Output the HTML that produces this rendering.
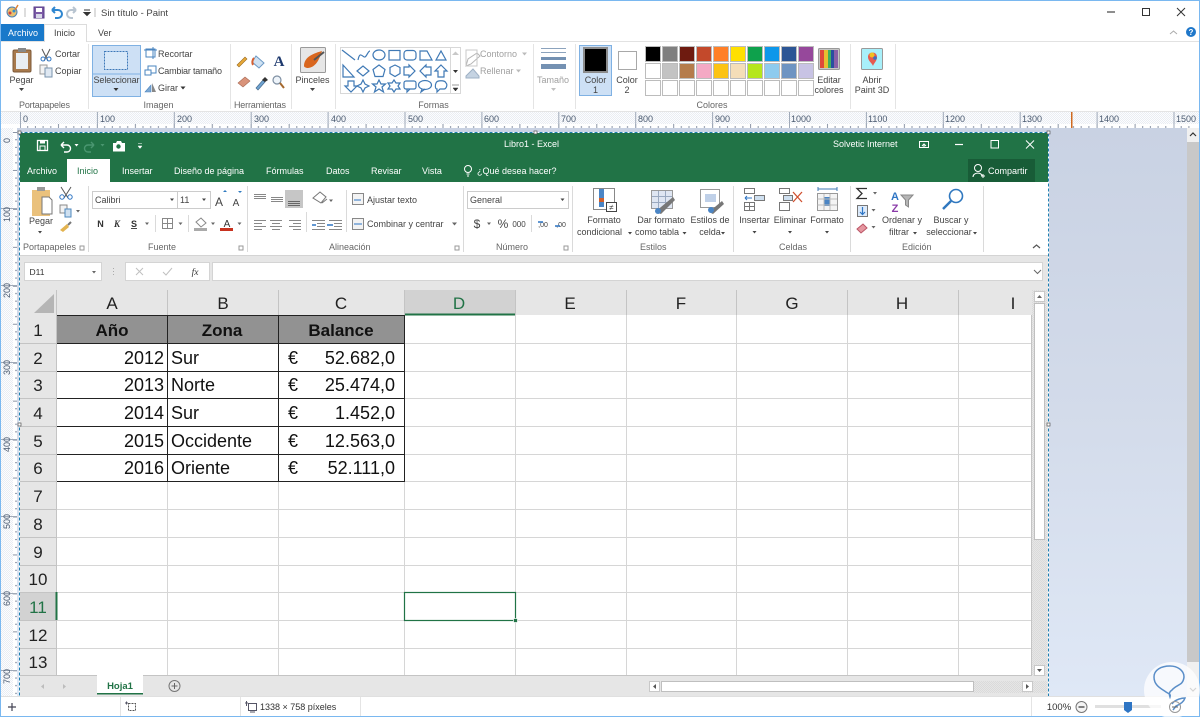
<!DOCTYPE html>
<html lang="es"><head><meta charset="utf-8"><title>Sin título - Paint</title>
<style>
html,body{margin:0;padding:0;background:#fff;width:1200px;height:717px;overflow:hidden}
svg{display:block}
text{font-family:"Liberation Sans",sans-serif;font-size:9px;fill:#444}
.m{text-anchor:middle}
.g{fill:#666}
.l{fill:#a0a0a0}
.w{fill:#fff}
.r{font-size:9px;fill:#4a5a70}
.h{font-size:17px;fill:#222;text-anchor:middle}
.c{font-size:18px;fill:#111}
.b{font-size:17px;font-weight:bold;fill:#111;text-anchor:middle}
.e{text-anchor:end}
.s{fill:none;stroke:#3f79b5;stroke-width:1.2}
.k{fill:none;stroke:#666;stroke-width:1}
.t{fill:#555}
</style></head><body>
<svg width="1200" height="717" viewBox="0 0 1200 717" xmlns="http://www.w3.org/2000/svg">
<defs>
<pattern id="dith" width="2" height="2" patternUnits="userSpaceOnUse"><rect width="2" height="2" fill="#fdfdfe"/><rect width="1" height="1" fill="#e9edf3"/><rect x="1" y="1" width="1" height="1" fill="#e9edf3"/></pattern>
<pattern id="dg" width="2" height="2" patternUnits="userSpaceOnUse"><rect width="2" height="2" fill="#e6e6e6"/><rect width="1" height="1" fill="#dadada"/><rect x="1" y="1" width="1" height="1" fill="#dadada"/></pattern>
<pattern id="hticks" x="20" y="124" width="76.9" height="4" patternUnits="userSpaceOnUse"><path d="M.5 0V4M7.7 2V4M15.4 2V4M23.1 2V4M30.8 2V4M38.5 0V4M46.1 2V4M53.8 2V4M61.5 2V4M69.2 2V4" stroke="#8a94a6" stroke-width="1" fill="none"/></pattern>
<pattern id="vticks" x="13" y="132" width="4" height="76.9" patternUnits="userSpaceOnUse"><path d="M0 .5H4M2 7.7H4M2 15.4H4M2 23.1H4M2 30.8H4M0 38.5H4M2 46.1H4M2 53.8H4M2 61.5H4M2 69.2H4" stroke="#8a94a6" stroke-width="1" fill="none"/></pattern>
<linearGradient id="canv" x1="0" y1="0" x2="0" y2="1"><stop offset="0" stop-color="#c9d2e3"/><stop offset=".5" stop-color="#d3dbea"/><stop offset="1" stop-color="#dfe8f6"/></linearGradient>
</defs>

<rect width="1200" height="717" fill="#fff"/>

<!-- Quick access -->
<circle cx="12" cy="12" r="5" fill="#e8c070" stroke="#4a80b8"/><circle cx="10" cy="13" r="1.5" fill="#d04040"/><circle cx="14" cy="11" r="1.5" fill="#3090d0"/><path d="M15 10l3-5" stroke="#e08030" stroke-width="1.4"/>
<path d="M25 8V17" stroke="#bbb"/>
<rect x="34" y="7" width="10" height="11" fill="#7b5aa6" stroke="#5a3f88"/><rect x="36" y="8" width="6" height="4" fill="#fff"/><rect x="36" y="14" width="6" height="4" fill="#d8d8e8"/>
<path d="M52 10h6a4 4 0 0 1 0 8h-3M52 10l3-3M52 10l3 3" fill="none" stroke="#2e86d0" stroke-width="2"/>
<path d="M76 10h-5a4 4 0 0 0 0 8h2M76 10l-3-3M76 10l-3 3" fill="none" stroke="#b8c4d0" stroke-width="2"/>
<path d="M84 10h6M84 12.500l3 3 3-3z" fill="#333" stroke="#333"/>
<path d="M95 8V17" stroke="#bbb"/>
<text x="101" y="16" style="font-size:9.500px" fill="#333">Sin título - Paint</text>

<!-- Window buttons -->
<path d="M1107 12H1115" stroke="#444" stroke-width="1.200"/>
<rect x="1142.500" y="8.500" width="7" height="7" fill="none" stroke="#333"/>
<path d="M1177 8l8 8M1185 8l-8 8" stroke="#333" stroke-width="1"/>
<path d="M1170 34l3.500-3 3.500 3" fill="none" stroke="#aaa"/>
<circle cx="1191" cy="32" r="5" fill="#1f77c9"/><text x="1191" y="35" class="w m" style="font-size:8px;font-weight:bold">?</text>

<!-- Tabs -->
<rect x="1" y="24" width="43" height="18" fill="#1979ca"/>
<text x="8" y="36" class="w">Archivo</text>
<path d="M44.500 42V24.500H86.500V42" fill="#fff" stroke="#dcdcdc"/>
<text x="54" y="36" fill="#333">Inicio</text>
<text x="98" y="36" fill="#333">Ver</text>
<path d="M87 41.500H1200M0 41.500H44" stroke="#e2e2e2"/>

<!-- Ribbon rule -->
<rect x="0" y="111" width="1200" height="1" fill="#e4e4e4"/>
<g stroke="#e4e4e4"><path d="M88.500 44V109M230.500 44V109M291.500 44V109M335.500 44V109M533.500 44V109M575.500 44V109M850.500 44V109M895.500 44V109"/></g>

<!-- Pegar -->
<rect x="13" y="50" width="18" height="22" rx="1.500" fill="#a8794c" stroke="#7d5a3a"/><rect x="16" y="53" width="12" height="16" fill="#e9eef3"/><rect x="18" y="48" width="8" height="4" fill="#888"/>
<text x="21.500" y="83" class="m">Pegar</text><path d="M19 88h5l-2.500 3z" fill="#444"/>
<path d="M42 49l6 12M50 49l-6 12" stroke="#555" fill="none"/><circle cx="43" cy="59" r="2" fill="none" stroke="#2e75c4"/><circle cx="49" cy="59" r="2" fill="none" stroke="#2e75c4"/>
<text x="55" y="57" fill="#444">Cortar</text>
<rect x="40" y="65" width="7" height="9" fill="#f3f3f3" stroke="#999"/><rect x="45" y="68" width="7" height="9" fill="#dfe8f2" stroke="#7a93ad"/>
<text x="55" y="74">Copiar</text>
<text x="19" y="108" class="g" textLength="51">Portapapeles</text>

<!-- Seleccionar -->
<rect x="92.500" y="45.500" width="48" height="51" fill="#cde0f5" stroke="#7fb1e3"/><path d="M93 74H140" stroke="#7fb1e3"/>
<rect x="104.500" y="51.500" width="23" height="18" fill="#d8e8f8" stroke="#3d78b8" stroke-dasharray="2 1"/>
<text x="93.500" y="83" textLength="46">Seleccionar</text><path d="M113.500 88h5l-2.500 3z" fill="#333"/>
<rect x="146" y="49" width="9" height="8" fill="none" stroke="#4a84bf"/><path d="M144 50h13M153 47v12" stroke="#4a84bf"/>
<text x="158" y="57">Recortar</text>
<rect x="148" y="66" width="8" height="7" fill="none" stroke="#4a84bf"/><rect x="145" y="70" width="6" height="5" fill="#fff" stroke="#4a84bf"/>
<text x="158" y="74" textLength="64">Cambiar tamaño</text>
<path d="M145 92l6-7v7zM147 90" fill="#7ea8d2" stroke="#4a84bf" stroke-width=".6"/><path d="M152 92v-9l4 9z" fill="#888"/>
<text x="158" y="91">Girar</text><path d="M180.500 86.500h5l-2.500 3z" fill="#333"/>
<text x="158.500" y="108" class="g m">Imagen</text>

<!-- Herramientas -->
<path d="M237 65l8-8 2 2-8 8z" fill="#e7a938" stroke="#9a6a20" stroke-width=".6"/>
<path d="M256 56l8 7-5 5-7-6z" fill="#cfe2f3" stroke="#6b98c4"/><path d="M254 58c-2 2-2 5-1 7" stroke="#d86030" stroke-width="2" fill="none"/>
<text x="279" y="66" style="font-family:'Liberation Serif',serif;font-size:15px;font-weight:bold;fill:#1f3a6e" class="m">A</text>
<path d="M238 83l7-6 5 4-7 6z" fill="#d9937a" stroke="#a86a54" stroke-width=".6"/>
<path d="M256 88l7-8 2 2-7 8z" fill="#6fa4d2" stroke="#47698c" stroke-width=".7"/><path d="M262 80l3-3 3 3-3 2z" fill="#333"/>
<circle cx="277" cy="80" r="4" fill="#eef4fa" stroke="#7e8fa2" stroke-width="1.200"/><path d="M280 83l4 5" stroke="#a5692e" stroke-width="2"/>
<text x="234" y="108" class="g" textLength="52">Herramientas</text>

<!-- Pinceles -->
<rect x="300.500" y="47.500" width="25" height="25" rx="1" fill="#e6e6e6" stroke="#9a9a9a"/><path d="M304 66c0-8 7-12 18-15-3 9-6 16-14 17-2 0-4-1-4-2z" fill="#d9661e"/><path d="M314 60l10-8" stroke="#555" stroke-width="2"/>
<text x="312.500" y="83" class="m">Pinceles</text><path d="M310 88h5l-2.500 3z" fill="#444"/>

<!-- Formas gallery -->
<rect x="340.500" y="47.500" width="110" height="46" fill="#fff" stroke="#d8d8d8"/><rect x="450.500" y="47.500" width="10" height="46" fill="#fff" stroke="#d8d8d8"/>
<path d="M452 55l3.500-3.500 3.500 3.500z" fill="#c8c8c8"/><path d="M453 70h5l-2.500 3z" fill="#333"/><path d="M452 85h7M453 88h5l-2.500 3z" fill="#333" stroke="#333" stroke-width=".5"/>
<g class="s">
<path d="M342 50l13 10" class="s"/>
<path d="M358 60c2-10 5-2 7-3s3-6 5-6" class="s"/>
<ellipse cx="379" cy="55" rx="6" ry="5" class="s"/>
<rect x="389" y="50.500" width="11" height="9.500" class="s"/>
<rect x="404" y="50.500" width="12" height="9.500" rx="3" class="s"/>
<path d="M420 60v-9h7l5 9z" class="s"/>
<path d="M436 60l5-9 5 9z" class="s"/>
<path d="M343 77V65l11 12z" class="s"/>
<path d="M357 71l6-5 6 5-6 5z" class="s"/>
<path d="M379 65l6 4.500-2 7h-8l-2-7z" class="s"/>
<path d="M395 65l5 2.500v6l-5 3-5-3v-6z" class="s"/>
<path d="M404 67h5v-2l6 6-6 6v-2h-5z" class="s"/>
<path d="M431 67h-5v-2l-6 6 6 6v-2h5z" class="s"/>
<path d="M441 65l6 6h-3v6h-6v-6h-3z" class="s"/>
<path d="M348 81h6v5h3l-6 6-6-6h3z" class="s"/>
<path d="M363 80l2 4 4 2-4 2-2 4-2-4-4-2 4-2z" class="s"/>
<path d="M379 80l2 4h4.500l-3.500 3 1.500 5-4.500-3-4.500 3 1.500-5-3.500-3H377z" class="s"/>
<path d="M394 80l2 3h4l-2 3 2 3h-4l-2 3-2-3h-4l2-3-2-3h4z" class="s"/>
<rect x="404" y="81" width="12" height="8" rx="2" class="s"/><path d="M407 89v3l3-3" class="s"/>
<ellipse cx="425" cy="85" rx="6.500" ry="4.500" class="s"/><path d="M422 89l-1 3 4-3" class="s"/>
<path d="M436 83c1-3 9-3 10 0 2 2 0 6-2 6h-4l-3 3v-3c-2 0-2-4-1-6z" class="s"/>
</g>
<path d="M466 66l2-7 9-6 3 3-9 8z" fill="#fff" stroke="#b5b5b5"/><path d="M466 50h11v16h-11z" fill="none" stroke="#c8c8c8"/>
<text x="480" y="57" class="l">Contorno</text><path d="M522 52.500h5l-2.500 3z" fill="#bbb"/>
<path d="M466 76l7-7 6 7v2h-13z" fill="#c5d3e2" stroke="#9eb0c4"/>
<text x="480" y="74" class="l">Rellenar</text><path d="M516 69.500h5l-2.500 3z" fill="#bbb"/>
<text x="433.500" y="108" class="g m">Formas</text>

<!-- Tamaño -->
<rect x="541" y="48" width="25" height="1" fill="#8ca3bd"/><rect x="541" y="52" width="25" height="1" fill="#8ca3bd"/><rect x="541" y="57" width="25" height="3" fill="#7491b2"/><rect x="541" y="64" width="25" height="5" fill="#7491b2"/>
<text x="553" y="83" class="l m">Tamaño</text><path d="M551 88h5l-2.500 3z" fill="#c0c0c0"/>

<!-- Colors -->
<rect x="579.500" y="45.500" width="32" height="50" fill="#cde0f5" stroke="#7fb1e3"/>
<rect x="584" y="48" width="23" height="24" fill="#000" stroke="#8c8c8c" stroke-width="2"/>
<text x="595.500" y="83" class="m" fill="#222">Color</text><text x="595.500" y="93" class="m" fill="#222">1</text>
<rect x="618.500" y="51.500" width="18" height="18" fill="#fff" stroke="#a8a8a8" stroke-width="1"/>
<text x="627" y="83" class="m">Color</text><text x="627" y="93" class="m">2</text>
<g stroke="#bcbcbc" stroke-width="1">
<rect x="645.500" y="46.500" width="15" height="15" fill="#000"/>
<rect x="662.500" y="46.500" width="15" height="15" fill="#7f7f7f"/>
<rect x="679.500" y="46.500" width="15" height="15" fill="#6e1b10"/>
<rect x="696.500" y="46.500" width="15" height="15" fill="#c3492b"/>
<rect x="713.500" y="46.500" width="15" height="15" fill="#ff7f27"/>
<rect x="730.500" y="46.500" width="15" height="15" fill="#ffe000"/>
<rect x="747.500" y="46.500" width="15" height="15" fill="#0ea14c"/>
<rect x="764.500" y="46.500" width="15" height="15" fill="#0d97ea"/>
<rect x="781.500" y="46.500" width="15" height="15" fill="#2c5695"/>
<rect x="798.500" y="46.500" width="15" height="15" fill="#96489b"/>
<rect x="645.500" y="63.500" width="15" height="15" fill="#fff"/>
<rect x="662.500" y="63.500" width="15" height="15" fill="#c3c3c3"/>
<rect x="679.500" y="63.500" width="15" height="15" fill="#b57c4c"/>
<rect x="696.500" y="63.500" width="15" height="15" fill="#f4a9c4"/>
<rect x="713.500" y="63.500" width="15" height="15" fill="#fcc314"/>
<rect x="730.500" y="63.500" width="15" height="15" fill="#f5deb8"/>
<rect x="747.500" y="63.500" width="15" height="15" fill="#b5e61d"/>
<rect x="764.500" y="63.500" width="15" height="15" fill="#8ecbee"/>
<rect x="781.500" y="63.500" width="15" height="15" fill="#6e94c2"/>
<rect x="798.500" y="63.500" width="15" height="15" fill="#c8c3e4"/>
<g fill="#fff">
<rect x="645.500" y="80.500" width="15" height="15"/><rect x="662.500" y="80.500" width="15" height="15"/><rect x="679.500" y="80.500" width="15" height="15"/><rect x="696.500" y="80.500" width="15" height="15"/><rect x="713.500" y="80.500" width="15" height="15"/><rect x="730.500" y="80.500" width="15" height="15"/><rect x="747.500" y="80.500" width="15" height="15"/><rect x="764.500" y="80.500" width="15" height="15"/><rect x="781.500" y="80.500" width="15" height="15"/><rect x="798.500" y="80.500" width="15" height="15"/>
</g></g>
<rect x="818.500" y="48.500" width="21" height="21" rx="1" fill="#c6c6c6" stroke="#9a9a9a"/>
<rect x="820" y="50" width="4" height="18" fill="#e04a3a"/><rect x="824" y="50" width="4" height="18" fill="#e8c030"/><rect x="828" y="50" width="3" height="18" fill="#40b060"/><rect x="831" y="50" width="3" height="18" fill="#2a4ea0"/><rect x="834" y="50" width="4" height="18" fill="#8a60a8"/>
<text x="829" y="83" class="m">Editar</text><text x="829" y="93" class="m">colores</text>
<rect x="861.500" y="48.500" width="21" height="21" rx="1" fill="#a8f0fa" stroke="#9a9a9a"/><path d="M868 57c0-6 9-6 9 0 0 4-3 6-4 9-1-3-5-5-5-9z" fill="#e65a50"/><circle cx="872" cy="55" r="2.500" fill="#f0c020"/><circle cx="875" cy="58" r="1.800" fill="#3a6fc0"/>
<text x="872" y="83" class="m">Abrir</text><text x="872" y="93" class="m">Paint 3D</text>
<text x="712" y="108" class="g m">Colores</text>

<!-- Rulers -->
<rect x="0" y="112" width="1200" height="12" fill="url(#dith)"/>
<rect x="0" y="124" width="1200" height="4" fill="#fff"/>
<rect x="20" y="124" width="1170" height="4" fill="url(#hticks)"/>
<path d="M20.500 112V128M97.400 112V128M174.300 112V128M251.200 112V128M328.100 112V128M405 112V128M481.900 112V128M558.800 112V128M635.700 112V128M712.600 112V128M789.500 112V128M866.400 112V128M943.300 112V128M1020.200 112V128M1097.100 112V128M1174 112V128" stroke="#9fa9b8"/>
<g class="r">
<text x="23" y="122" class="r">0</text><text x="100" y="122" class="r">100</text><text x="177" y="122" class="r">200</text><text x="254" y="122" class="r">300</text><text x="331" y="122" class="r">400</text><text x="408" y="122" class="r">500</text><text x="484" y="122" class="r">600</text><text x="561" y="122" class="r">700</text><text x="638" y="122" class="r">800</text><text x="715" y="122" class="r">900</text><text x="791" y="122" class="r">1000</text><text x="868" y="122" class="r">1100</text><text x="945" y="122" class="r">1200</text><text x="1022" y="122" class="r">1300</text><text x="1099" y="122" class="r">1400</text><text x="1176" y="122" class="r">1500</text>
</g>
<rect x="1071" y="112" width="1.500" height="16" fill="#d06a20"/>

<!-- Canvas area -->
<rect x="17" y="128" width="1170" height="568" fill="url(#canv)"/>
<rect x="0" y="128" width="13" height="568" fill="url(#dith)"/>
<rect x="13" y="128" width="4" height="568" fill="#fff"/>
<rect x="13" y="132" width="4" height="564" fill="url(#vticks)"/>
<path d="M1 208.500H17M1 285.500H17M1 362.500H17M1 439.500H17M1 516.500H17M1 593.500H17M1 670.500H17" stroke="#9fa9b8"/>
<g>
<text transform="translate(10 143) rotate(-90)" class="r">0</text>
<text transform="translate(10 222) rotate(-90)" class="r">100</text>
<text transform="translate(10 298) rotate(-90)" class="r">200</text>
<text transform="translate(10 375) rotate(-90)" class="r">300</text>
<text transform="translate(10 452) rotate(-90)" class="r">400</text>
<text transform="translate(10 529) rotate(-90)" class="r">500</text>
<text transform="translate(10 606) rotate(-90)" class="r">600</text>
<text transform="translate(10 684) rotate(-90)" class="r">700</text>
</g>
<rect x="0" y="0" width="1200" height="1" fill="#7ab8f0"/>
<rect x="0" y="0" width="1" height="717" fill="#7ab8f0"/>
<rect x="1199" y="0" width="1" height="717" fill="#7ab8f0"/>

<!-- Paint scrollbar -->
<rect x="1187" y="128" width="12" height="568" fill="#f0f0f0"/>
<rect x="1187" y="142" width="12" height="520" fill="#c8c8c8"/>
<path d="M1190 136l3-3 3 3" fill="none" stroke="#333" stroke-width="1.200"/>
<path d="M1190 688l3 3 3-3" fill="none" stroke="#555" stroke-width="1.200"/>

<!-- Excel window -->
<rect x="20" y="133" width="1028" height="563" fill="#e6e6e6"/>
<rect x="20" y="133" width="1028" height="49" fill="#217346"/>
<rect x="37.500" y="140.500" width="10" height="10" fill="none" stroke="#fff" stroke-width="1.300"/><rect x="40" y="140" width="5" height="3.500" fill="#fff"/><rect x="40" y="146" width="5" height="4.500" fill="none" stroke="#fff"/>
<path d="M61 145h6a3 3 0 0 1 0 7h-3M61 145l3-3M61 145l3 3" fill="none" stroke="#fff" stroke-width="1.400"/><path d="M74.500 144h4l-2 2.500z" fill="#fff"/>
<path d="M94 145h-6a3 3 0 0 0 0 7h3M94 145l-3-3M94 145l-3 3" fill="none" stroke="#4a9670" stroke-width="1.400"/><path d="M100.500 144h4l-2 2.500z" fill="#4a9670"/>
<path d="M113 143h3l1-2h4l1 2h3v8.500h-12z" fill="#fff"/><circle cx="118.500" cy="146.500" r="2.200" fill="#217346"/>
<path d="M138 143.500h4M138 146h4l-2 2.500z" fill="#fff" stroke="#fff" stroke-width=".5"/>
<text x="504" y="147" class="w">Libro1  -  Excel</text>
<text x="833" y="147" class="w">Solvetic Internet</text>
<rect x="919.500" y="141.500" width="9" height="6" fill="none" stroke="#fff"/><path d="M924 148v-4M922 146l2-2 2 2" stroke="#fff" fill="none"/>
<path d="M955 144.500H963" stroke="#fff" stroke-width="1.200"/>
<rect x="991" y="140.500" width="7.500" height="7.500" fill="none" stroke="#fff"/>
<path d="M1026 140.500l8 8M1034 140.500l-8 8" stroke="#fff"/>
<!-- tabs -->
<rect x="67" y="159" width="43" height="23" fill="#fff"/>
<text x="27" y="174" class="w">Archivo</text>
<text x="77" y="174" style="fill:#217346">Inicio</text>
<text x="122" y="174" class="w">Insertar</text>
<text x="174" y="174" class="w">Diseño de página</text>
<text x="266" y="174" class="w">Fórmulas</text>
<text x="326" y="174" class="w">Datos</text>
<text x="371" y="174" class="w">Revisar</text>
<text x="422" y="174" class="w">Vista</text>
<circle cx="468" cy="169" r="3.500" fill="none" stroke="#fff"/><path d="M466.500 174h3M467 176h2" stroke="#fff"/>
<text x="477" y="174" class="w">¿Qué desea hacer?</text>
<rect x="968" y="159" width="67" height="23" fill="#185c37"/>
<circle cx="978" cy="168" r="3.500" fill="none" stroke="#fff"/><path d="M973 177c0-5 9-5 9-1M981 176h4M983 174v4" fill="none" stroke="#fff"/>
<text x="988" y="174" class="w">Compartir</text>

<!-- Excel ribbon -->
<rect x="20" y="182" width="1028" height="74" fill="#fff"/>
<rect x="20" y="255" width="1028" height="1" fill="#d4d4d4"/>
<g stroke="#dadada"><path d="M88.500 186V252M247.500 186V252M463.500 186V252M572.500 186V252M733.500 186V252M850.500 186V252M983.500 186V252M306.500 212V232M346.500 190V232M531.500 215V232"/></g>
<!-- clipboard -->
<path d="M32 190h18v26H32z" fill="#eac17c"/><rect x="37" y="187" width="8" height="4" fill="#999"/><path d="M42 197h7l3 3v14H42z" fill="#fff" stroke="#777"/>
<text x="41" y="224" class="m">Pegar</text><path d="M38 231h4l-2 2.500z" fill="#444"/>
<path d="M61 187l7 11M71 187l-7 11" stroke="#555"/><circle cx="62" cy="197" r="2.200" fill="none" stroke="#2e75c4"/><circle cx="70" cy="197" r="2.200" fill="none" stroke="#2e75c4"/>
<rect x="60" y="205" width="7" height="8" fill="#f3f3f3" stroke="#888"/><rect x="65" y="209" width="6" height="8" fill="#cfe0f0" stroke="#4e87bd"/><path d="M76 210h4l-2 2.500z" fill="#666"/>
<path d="M60 230l7-6 2 3-6 5z" fill="#e3b34f"/>
<path d="M68 225l3-3" stroke="#777" stroke-width="2"/>
<text x="23" y="250" class="g">Portapapeles</text>
<rect x="80" y="246" width="4" height="4" fill="none" stroke="#999"/>
<!-- font -->
<rect x="92.500" y="191.500" width="118" height="17" fill="#fff" stroke="#ccc"/><path d="M177.500 192V208" stroke="#ccc"/>
<text x="95" y="203">Calibri</text><path d="M170 198.500h4l-2 2.500z" fill="#444"/>
<text x="180" y="203">11</text><path d="M202 198.500h4l-2 2.500z" fill="#444"/>
<text x="219" y="206" class="m" style="font-size:12px">A</text><path d="M223 192l2-2 2 2z" fill="#2f7ac0"/>
<text x="236" y="206" class="m" style="font-size:10px">A</text><path d="M238 191l2 2 2-2z" fill="#2f7ac0"/>
<text x="100.500" y="227" class="m" style="font-weight:bold;fill:#333">N</text>
<text x="117" y="227" class="m" style="font-weight:bold;font-style:italic;font-family:'Liberation Serif',serif;fill:#333">K</text>
<text x="134" y="227" class="m" style="text-decoration:underline;fill:#333;font-weight:bold">S</text>
<path d="M145 222.500h4l-2 2.500z" fill="#666"/>
<rect x="162.500" y="218.500" width="10" height="10" fill="none" stroke="#888"/><path d="M167.500 219V228M163 223.500H172" stroke="#888"/>
<path d="M178.500 222.500h4l-2 2.500z" fill="#666"/>
<path d="M155.500 215V232M188.500 215V232" stroke="#dadada"/>
<path d="M196 222l5-4 5 5-5 4z" fill="#fff" stroke="#888"/><rect x="194" y="228" width="13" height="3" fill="#aaa"/>
<path d="M211 222.500h4l-2 2.500z" fill="#666"/>
<text x="227" y="227" class="m" style="font-size:10px;fill:#333">A</text><rect x="220" y="228" width="13" height="3" fill="#c8321f"/>
<path d="M237.500 222.500h4l-2 2.500z" fill="#666"/>
<text x="148" y="250" class="g">Fuente</text>
<rect x="239" y="246" width="4" height="4" fill="none" stroke="#999"/>
<!-- align -->
<g stroke="#888"><path d="M254 194.500H266M254 196.500H266M254 198.500H266"/><path d="M271 197.500H283M271 199.500H283M271 201.500H283"/></g>
<rect x="285" y="190" width="18" height="18" fill="#c6c6c6"/><path d="M288 201.500H300M288 203.500H300M288 205.500H300" stroke="#666"/>
<path d="M313 198l7-6 6 5-5 6zM322 203l5-4" fill="none" stroke="#777"/><path d="M329 199.500h4l-2 2.500z" fill="#666"/>
<g stroke="#888"><path d="M254 220.500H266M254 223.500H262M254 226.500H266M254 229.500H262"/><path d="M270 220.500H282M272 223.500H280M270 226.500H282M272 229.500H280"/><path d="M289 220.500H301M293 223.500H301M289 226.500H301M293 229.500H301"/><path d="M312 220.500H325M317 223.500H325M317 226.500H325M312 229.500H325"/><path d="M329 220.500H342M334 223.500H342M334 226.500H342M329 229.500H342"/></g>
<path d="M312 225h4M327 225h6" stroke="#2e75c4" stroke-width="1.500"/>
<rect x="352.500" y="193.500" width="11" height="11" fill="#f3f3f3" stroke="#888"/><path d="M354 200h7" stroke="#2e75c4"/>
<text x="367" y="203">Ajustar texto</text>
<rect x="352.500" y="218.500" width="11" height="11" fill="#f3f3f3" stroke="#888"/><path d="M354 224h8" stroke="#2e75c4"/>
<text x="367" y="227">Combinar y centrar</text><path d="M452 222.500h5l-2.500 3z" fill="#666"/>
<text x="329" y="250" class="g">Alineación</text>
<rect x="455" y="246" width="4" height="4" fill="none" stroke="#999"/>
<!-- number -->
<rect x="467.500" y="191.500" width="101" height="17" fill="#fff" stroke="#ccc"/>
<text x="470" y="203">General</text><path d="M560.500 198.500h4l-2 2.500z" fill="#444"/>
<text x="477" y="228" class="m" style="font-size:12px">$</text><path d="M487 222.500h4l-2 2.500z" fill="#666"/>
<text x="503" y="228" class="m" style="font-size:12px">%</text>
<text x="519" y="227" class="m" style="font-size:8px">000</text>
<text x="543" y="227" class="m" style="font-size:7px">,00</text><path d="M538 222h5" stroke="#2e75c4" stroke-width="1.500"/>
<text x="561" y="227" class="m" style="font-size:7px">,00</text><path d="M555 226h5" stroke="#2e75c4" stroke-width="1.500"/>
<text x="496" y="250" class="g">Número</text>
<rect x="564" y="246" width="4" height="4" fill="none" stroke="#999"/>
<!-- styles -->
<rect x="593.500" y="188.500" width="21" height="21" fill="#fff" stroke="#888"/><rect x="599" y="189" width="5" height="18" fill="#4a85c5"/><rect x="599" y="198" width="5" height="4" fill="#d0602c"/>
<rect x="606.500" y="202.500" width="10" height="9" fill="#fff" stroke="#444"/><text x="611.500" y="210" class="m" style="font-size:8px">≠</text>
<text x="604" y="223" class="m">Formato</text><text x="577" y="235">condicional</text><path d="M628 232h4l-2 2.500z" fill="#444"/>
<rect x="651.500" y="190.500" width="21" height="18" fill="#dfe6f2" stroke="#999"/><path d="M658.500 191V208M665.500 191V208M652 196.500H672M652 202.500H672" stroke="#9aa9c0"/><path d="M655 212l18-15 2 3-14 14z" fill="#777"/><circle cx="658" cy="211" r="3" fill="#4a85c5"/>
<text x="661" y="223" class="m">Dar formato</text><text x="635" y="235">como tabla</text><path d="M682.500 232h4l-2 2.500z" fill="#444"/>
<rect x="700.500" y="189.500" width="19" height="18" fill="#fff" stroke="#999"/><rect x="705" y="194" width="11" height="8" fill="#bfd0e8"/><path d="M709 212l13-11 2 3-11 10z" fill="#777"/><circle cx="711" cy="210" r="3" fill="#4a85c5"/>
<text x="710" y="223" class="m">Estilos de</text><text x="710" y="235" class="m">celda</text><path d="M721 232h4l-2 2.500z" fill="#444"/>
<text x="640" y="250" class="g">Estilos</text>
<!-- cells -->
<g fill="#fff" stroke="#777"><rect x="744.500" y="188.500" width="10" height="5"/><rect x="744.500" y="202.500" width="10" height="8"/><rect x="754.500" y="195.500" width="10" height="5" fill="#cfe0f0"/></g><path d="M745 198h7M745 198l2-2M745 198l2 2" stroke="#2e75c4" fill="none"/><path d="M744.500 206.500h10M749.500 203v7" stroke="#777"/>
<text x="754.500" y="223" class="m">Insertar</text><path d="M752.500 231h4l-2 2.500z" fill="#444"/>
<g fill="#fff" stroke="#777"><rect x="779.500" y="188.500" width="10" height="5"/><rect x="779.500" y="202.500" width="10" height="8"/><rect x="783.500" y="195.500" width="9" height="5" fill="#cfe0f0"/></g><path d="M793 192l9 10M802 192l-9 10" stroke="#d0502f" stroke-width="1.300"/>
<text x="790" y="223" class="m">Eliminar</text><path d="M788 231h4l-2 2.500z" fill="#444"/>
<rect x="817.500" y="193.500" width="20" height="17" fill="#f4f4f4" stroke="#999"/><rect x="824" y="197" width="6" height="9" fill="#4a85c5"/><path d="M818 189h19M818 187v4M837 187v4" stroke="#3f79b5"/><path d="M817.500 199H837M817.500 205H837M824 194V210M830 194V210" stroke="#bbb"/>
<text x="827" y="223" class="m">Formato</text><path d="M825 231h4l-2 2.500z" fill="#444"/>
<text x="779" y="250" class="g">Celdas</text>
<!-- edit -->
<path d="M867 188.500h-10l5 5-5 5h10" fill="none" stroke="#333" stroke-width="1.300"/><path d="M873 192h4l-2 2.500z" fill="#666"/>
<rect x="857.500" y="205.500" width="10" height="11" fill="#dceafa" stroke="#777"/><path d="M862.500 207v7M860 212l2.500 2.500 2.500-2.500" fill="none" stroke="#2e75c4" stroke-width="1.200"/><path d="M871.500 209h4l-2 2.500z" fill="#666"/>
<path d="M857 229l6-5 4 4-6 5z" fill="#e597a0" stroke="#b56"/><path d="M871.500 226h4l-2 2.500z" fill="#666"/>
<text x="895" y="200" class="m" style="font-size:11px;font-weight:bold;fill:#2e75c4">A</text><text x="895" y="212" class="m" style="font-size:11px;font-weight:bold;fill:#8a3ba8">Z</text>
<path d="M901 195h12l-4.500 5v7l-3-2v-5z" fill="#b5b5b5" stroke="#888"/>
<text x="902" y="223" class="m">Ordenar y</text><text x="899" y="235" class="m">filtrar</text><path d="M913 232h4l-2 2.500z" fill="#444"/>
<circle cx="956" cy="196" r="6.500" fill="#fff" stroke="#3078bf" stroke-width="1.600"/><path d="M951 201l-8 8" stroke="#3078bf" stroke-width="2.500"/>
<text x="951" y="223" class="m">Buscar y</text><text x="949" y="235" class="m">seleccionar</text><path d="M973 232h4l-2 2.500z" fill="#444"/>
<text x="902" y="250" class="g">Edición</text>
<path d="M1033 248l3.500-3 3.500 3" fill="none" stroke="#555" stroke-width="1.200"/>

<!-- Formula bar -->
<rect x="24.500" y="262.500" width="77" height="18" fill="#fff" stroke="#d4d4d4"/>
<text x="29.500" y="275" style="font-size:8.500px;fill:#333">D11</text><path d="M92 271h4l-2 2.500z" fill="#666"/>
<path d="M113.500 268v1M113.500 271v1M113.500 274v1" stroke="#aaa"/>
<rect x="125.500" y="262.500" width="84" height="18" fill="#fff" stroke="#d4d4d4"/>
<path d="M136 268l7 7M143 268l-7 7" stroke="#c0c0c0"/>
<path d="M163 272l3 3 6-7" stroke="#c0c0c0" fill="none"/>
<text x="195" y="275" class="m" style="font-family:'Liberation Serif',serif;font-style:italic;font-size:9.500px;fill:#333">fx</text>
<rect x="212.500" y="262.500" width="830" height="18" fill="#fff" stroke="#d4d4d4"/>
<path d="M1034 270l3.500 3.500 3.500-3.500" fill="none" stroke="#666"/>

<!-- Grid -->
<rect x="20" y="290" width="1012" height="386" fill="#e6e6e6"/>
<rect x="57" y="315" width="975" height="360" fill="#fff"/>
<path d="M54 294v19H34z" fill="#b5b5b5"/>
<rect x="405" y="290" width="110" height="25" fill="#d2d2d2"/>
<rect x="20" y="592" width="37" height="28" fill="#d2d2d2"/>
<g stroke="#d6d6d6">
<path d="M167.500 315V675M278.500 315V675M404.500 315V675M515.500 315V675M626.500 315V675M736.500 315V675M847.500 315V675M958.500 315V675"/>
<path d="M57 343.500H1032M57 371.500H1032M57 398.500H1032M57 426.500H1032M57 454.500H1032M57 481.500H1032M57 509.500H1032M57 537.500H1032M57 565.500H1032M57 592.500H1032M57 620.500H1032M57 648.500H1032"/>
</g>
<g stroke="#c4c4c4">
<path d="M56.500 290V675M167.500 290V315M278.500 290V315M404.500 290V315M515.500 290V315M626.500 290V315M736.500 290V315M847.500 290V315M958.500 290V315"/>
<path d="M20 343.500H57M20 371.500H57M20 398.500H57M20 426.500H57M20 454.500H57M20 481.500H57M20 509.500H57M20 537.500H57M20 565.500H57M20 592.500H57M20 620.500H57M20 648.500H57"/>
<path d="M20 675.500H1032M1031.500 315V676"/>
</g>
<rect x="405" y="313.500" width="110" height="2" fill="#217346"/>
<rect x="55.500" y="592" width="2" height="28" fill="#217346"/>
<rect x="57" y="315" width="347" height="28" fill="#929292"/>
<path d="M57 315.500H404.500M57 343.500H404.500M57 371.500H404.500M57 398.500H404.500M57 426.500H404.500M57 454.500H404.500M57 481.500H404.500M167.500 315V482M278.500 315V482M404.500 315V482" stroke="#222" fill="none"/>
<g>
<text x="112" y="309" class="h">A</text><text x="223" y="309" class="h">B</text><text x="341" y="309" class="h">C</text><text x="459" y="309" class="h" style="fill:#217346">D</text><text x="570" y="309" class="h">E</text><text x="681" y="309" class="h">F</text><text x="792" y="309" class="h">G</text><text x="902" y="309" class="h">H</text><text x="1013" y="309" class="h">I</text>
<text x="38" y="336" class="h">1</text><text x="38" y="364" class="h">2</text><text x="38" y="391" class="h">3</text><text x="38" y="419" class="h">4</text><text x="38" y="447" class="h">5</text><text x="38" y="474" class="h">6</text><text x="38" y="502" class="h">7</text><text x="38" y="530" class="h">8</text><text x="38" y="558" class="h">9</text><text x="38" y="585" class="h">10</text><text x="38" y="613" class="h" style="fill:#217346">11</text><text x="38" y="641" class="h">12</text><text x="38" y="668" class="h">13</text>
</g>
<text x="112" y="336" class="b">Año</text><text x="222" y="336" class="b">Zona</text><text x="341" y="336" class="b">Balance</text>
<text x="164" y="364" class="c e">2012</text><text x="164" y="391" class="c e">2013</text><text x="164" y="419" class="c e">2014</text><text x="164" y="447" class="c e">2015</text><text x="164" y="474" class="c e">2016</text>
<text x="171" y="364" class="c">Sur</text><text x="171" y="391" class="c">Norte</text><text x="171" y="419" class="c">Sur</text><text x="171" y="447" class="c">Occidente</text><text x="171" y="474" class="c">Oriente</text>
<text x="288" y="364" class="c">€</text><text x="288" y="391" class="c">€</text><text x="288" y="419" class="c">€</text><text x="288" y="447" class="c">€</text><text x="288" y="474" class="c">€</text>
<text x="395" y="364" class="c e">52.682,0</text><text x="395" y="391" class="c e">25.474,0</text><text x="395" y="419" class="c e">1.452,0</text><text x="395" y="447" class="c e">12.563,0</text><text x="395" y="474" class="c e">52.111,0</text>
<rect x="404.500" y="592.500" width="111" height="28" fill="none" stroke="#217346" stroke-width="1.200"/>
<rect x="513.500" y="618.500" width="4" height="4" fill="#217346" stroke="#fff" stroke-width=".7"/>

<!-- vertical scrollbar -->
<rect x="1032" y="290" width="15" height="386" fill="url(#dg)"/>
<rect x="1034.500" y="291.500" width="10" height="10" fill="#fff" stroke="#c8c8c8"/>
<path d="M1037 298h5l-2.500-3z" fill="#666"/>
<rect x="1034.500" y="303.500" width="10" height="236" fill="#fff" stroke="#bfbfbf"/>
<rect x="1034.500" y="665.500" width="10" height="10" fill="#fff" stroke="#c8c8c8"/>
<path d="M1037 669h5l-2.500 3z" fill="#555"/>

<!-- Sheet tabs -->
<rect x="20" y="676" width="1028" height="20" fill="#e6e6e6"/>
<path d="M44 684l-3 2.500 3 2.500z" fill="#bdbdbd"/><path d="M63 684l3 2.500-3 2.500z" fill="#bdbdbd"/>
<rect x="97" y="675" width="46" height="19" fill="#fff"/>
<rect x="97" y="693" width="46" height="1.500" fill="#217346"/>
<text x="120" y="689" class="m" style="font-weight:bold;fill:#217346;font-size:9.500px">Hoja1</text>
<circle cx="174.500" cy="686" r="5.500" fill="none" stroke="#777" stroke-width="1"/><path d="M171.500 686H177.500M174.500 683V689" stroke="#666"/>
<rect x="974" y="681" width="73" height="12" fill="url(#dg)"/>
<rect x="649.500" y="681.500" width="10" height="10" fill="#fff" stroke="#c8c8c8"/><path d="M656 684l-3 2.500 3 2.500z" fill="#555"/>
<rect x="661.500" y="681.500" width="312" height="10" fill="#fff" stroke="#bfbfbf"/>
<rect x="1022.500" y="681.500" width="10" height="10" fill="#fff" stroke="#c8c8c8"/><path d="M1026 684l3 2.500-3 2.500z" fill="#555"/>

<!-- Selection border -->
<path d="M19.500 132.500H1048.500V696M19.500 132.500V696" fill="none" stroke="#fff"/>
<path d="M19.500 132.500H1048.500V696M19.500 132.500V696" fill="none" stroke="#1e7fb0" stroke-dasharray="3 2"/>
<g fill="#fff" stroke="#555" stroke-width=".7"><rect x="18" y="131" width="3" height="3"/><rect x="534" y="131" width="3" height="3"/><rect x="1047" y="131" width="3" height="3"/><rect x="18" y="423" width="3" height="3"/><rect x="1047" y="423" width="3" height="3"/></g>

<!-- Status bar -->
<rect x="0" y="696" width="1200" height="20" fill="#fff"/>
<rect x="0" y="696" width="1200" height="1" fill="#e0e0e0"/>
<rect x="0" y="716" width="1200" height="1" fill="#7ab8f0"/>
<rect x="0" y="696" width="1" height="21" fill="#7ab8f0"/><rect x="1199" y="696" width="1" height="21" fill="#7ab8f0"/>
<path d="M120.500 697V716M240.500 697V716M360.500 697V716M1031.500 697V716" stroke="#e4e4e4"/>
<path d="M8 707H16M12 703V711" stroke="#445" stroke-width="1.200"/>
<rect x="128.500" y="703.500" width="7" height="7" fill="none" stroke="#555" stroke-dasharray="2 1"/><path d="M125 703h3M126.500 701.500v3" stroke="#556"/>
<rect x="248.500" y="703.500" width="8" height="7" fill="#fff" stroke="#556"/><path d="M245 703h3M246.500 701v5M250 712h5" stroke="#556"/>
<text x="260" y="710" style="fill:#333">1338 × 758 píxeles</text>
<text x="1059" y="710" class="m" style="font-size:9.500px;fill:#333">100%</text>
<circle cx="1081.500" cy="707" r="5.500" fill="#f4f4f4" stroke="#777"/><path d="M1078.500 707H1084.500" stroke="#333" stroke-width="1.200"/>
<rect x="1095" y="705" width="66" height="3" fill="#e0e0e0"/>
<path d="M1124 702h8v8l-4 3-4-3z" fill="#2e75c4"/>

<!-- Watermark -->
<circle cx="1172" cy="690" r="28" fill="#fff" opacity=".75"/>
<path d="M1170 697c-1-3-1-5 2-7 5-6 11-4 12-13 0-7-7-11-14-11-9 0-16 4-16 11 0 9 8 12 12 15 3 2 5 2 4 5z" fill="none" stroke="#5a8ec8" stroke-width="1.500"/>
<path d="M1172 704c3-5 11-6 13-6-1 3-4 6-9 8l-3 4" fill="none" stroke="#5a8ec8" stroke-width="1.500"/>
<circle cx="1175" cy="707" r="5.500" fill="none" stroke="#999"/>
<path d="M1172 707H1178" stroke="#666"/>
</svg>
</body></html>
